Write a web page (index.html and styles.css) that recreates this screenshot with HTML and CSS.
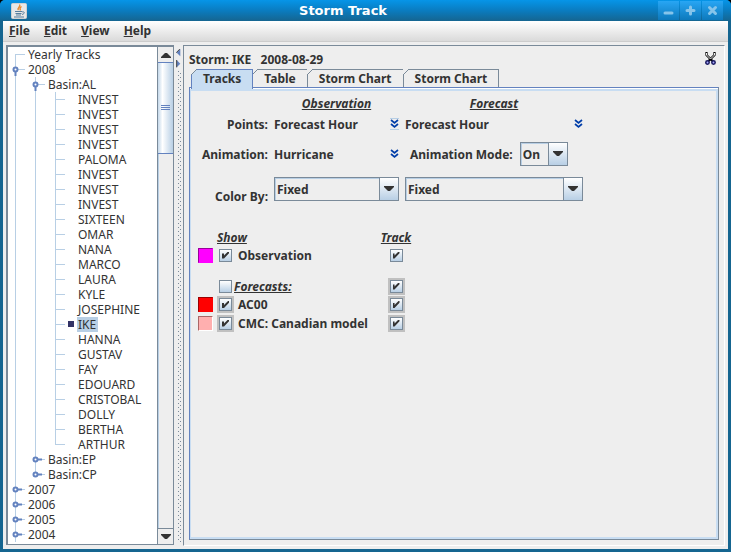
FILE: index.html
```html
<!DOCTYPE html>
<html lang="en">
<head>
<meta charset="utf-8">
<title>Storm Track</title>
<link rel="stylesheet" href="styles.css">
</head>
<body>
<svg class="defs" aria-hidden="true">
  <symbol id="closed" viewBox="0 0 11 15"><circle cx="3.5" cy="7.5" r="2" fill="#fff" stroke="#6382bf" stroke-width="2"/><path d="M6 7.5h4" stroke="#6382bf" stroke-width="2"/></symbol>
  <symbol id="opened" viewBox="0 0 11 15"><circle cx="3.5" cy="7.5" r="2" fill="#fff" stroke="#6382bf" stroke-width="2"/><path d="M3.5 10v4" stroke="#6382bf" stroke-width="2"/></symbol>
  <symbol id="down" viewBox="0 0 10 6"><path d="M0 0h10v1l-4 4h-2l-4-4z" fill="#333"/></symbol>
  <symbol id="chevrons" viewBox="0 0 9 10"><path d="M1 1l3.500 3l3.500-3M1 5l3.500 3l3.500-3" fill="none" stroke="#003da8" stroke-width="1.700"/></symbol>
</svg>
<div class="window">
  <header class="titlebar">
    <svg class="java" viewBox="0 0 16 16" aria-hidden="true"><rect x=".5" y=".5" width="15" height="15" rx="1" fill="#e8e8e8" stroke="#d0d0d0"/><path d="M8.500 1.500c2 2-3 3-1 5.500M10.500 3.500c-2 1-2 2-1 4" fill="none" stroke="#e8892c" stroke-width="1.300"/><path d="M4 8.500h7M4.500 10.500h6M5 12h5M3 14h10M11 9c3-1 3 2 0 2.500" fill="none" stroke="#587e9e"/></svg>
    <h1>Storm Track</h1>
    <div class="winbtns">
      <button aria-label="Minimize"><svg viewBox="0 0 11 11"><path d="M2 8h7" /></svg></button>
      <button aria-label="Maximize"><svg viewBox="0 0 11 11"><path d="M2 5.500h7M5.500 2v7"/></svg></button>
      <button aria-label="Close"><svg viewBox="0 0 11 11"><path d="M2.500 2.500l6 6M8.500 2.500l-6 6"/></svg></button>
    </div>
  </header>
  <nav class="menubar">
    <button><u>F</u>ile</button><button><u>E</u>dit</button><button><u>V</u>iew</button><button><u>H</u>elp</button>
  </nav>
  <main class="split">
    <section class="browser">
      <ul class="tree">
        <li>Yearly Tracks</li>
        <li><svg class="knob"><use href="#opened"/></svg>2008
          <ul>
            <li><svg class="knob"><use href="#opened"/></svg>Basin:AL
              <ul class="leaves">
                <li>INVEST</li><li>INVEST</li><li>INVEST</li><li>INVEST</li><li>PALOMA</li><li>INVEST</li><li>INVEST</li><li>INVEST</li><li>SIXTEEN</li><li>OMAR</li><li>NANA</li><li>MARCO</li><li>LAURA</li><li>KYLE</li><li>JOSEPHINE</li><li class="current"><span>IKE</span></li><li>HANNA</li><li>GUSTAV</li><li>FAY</li><li>EDOUARD</li><li>CRISTOBAL</li><li>DOLLY</li><li>BERTHA</li><li>ARTHUR</li>
              </ul>
            </li>
            <li><svg class="knob"><use href="#closed"/></svg>Basin:EP</li>
            <li><svg class="knob"><use href="#closed"/></svg>Basin:CP</li>
          </ul>
        </li>
        <li><svg class="knob"><use href="#closed"/></svg>2007</li>
        <li><svg class="knob"><use href="#closed"/></svg>2006</li>
        <li><svg class="knob"><use href="#closed"/></svg>2005</li>
        <li class="more"><svg class="knob"><use href="#closed"/></svg>2004</li>
      </ul>
      <div class="scrollbar">
        <button class="up" aria-label="Scroll up"><svg class="arrow"><use href="#down"/></svg></button>
        <div class="thumb"><i></i></div>
        <div class="track"></div>
        <button aria-label="Scroll down"><svg class="arrow"><use href="#down"/></svg></button>
      </div>
    </section>
    <div class="divider">
      <svg viewBox="0 0 5 24" aria-hidden="true"><path d="M4.500 0v8l-4-4z" fill="#6382bf"/><path d="M4 0l-4 4" stroke="#333"/><path d="M.5 12v8l4-4z" fill="#6382bf"/><path d="M.5 12v8" stroke="#333"/></svg>
      <div class="grip"></div>
    </div>
    <section class="detail">
      <div class="heading"><h2>Storm: IKE &nbsp; 2008-08-29</h2>
        <button aria-label="Remove"><svg viewBox="0 0 11 13"><path d="M1.500 0v3l6 6M9.500 0v3l-6 6" fill="none" stroke="#000" stroke-width="2.200"/><path d="M1.500 1v2l4 4M9.500 1v2l-4 4" fill="none" stroke="#eee"/><circle cx="2.500" cy="10.500" r="1.700" fill="#aaf" stroke="#1a1a60" stroke-width="1.500"/><circle cx="8.500" cy="10.500" r="1.700" fill="#aaf" stroke="#1a1a60" stroke-width="1.500"/></svg></button>
      </div>
      <div class="tabs" role="tablist">
        <button role="tab" aria-selected="true">Tracks</button><button role="tab">Table</button><button role="tab">Storm Chart</button><button role="tab">Storm Chart</button>
      </div>
      <div class="panel">
        <div class="settings">
          <span></span><h3>Observation</h3><h3>Forecast</h3>
          <span class="name">Points:</span>
          <div class="pick">Forecast Hour<button class="hover" aria-label="Observation points"><svg><use href="#chevrons"/></svg></button></div>
          <div class="pick">Forecast Hour<button aria-label="Forecast points"><svg><use href="#chevrons"/></svg></button></div>
          <span class="name">Animation:</span>
          <div class="pick">Hurricane<button aria-label="Animation"><svg><use href="#chevrons"/></svg></button></div>
          <div class="mode"><label for="mode">Animation Mode:</label><div class="combo"><select id="mode"><option>On</option><option>Off</option></select><span><svg class="arrow"><use href="#down"/></svg></span></div></div>
          <label class="name low" for="color">Color By:</label>
          <div class="combo"><select id="color"><option>Fixed</option></select><span><svg class="arrow"><use href="#down"/></svg></span></div>
          <div class="combo"><select aria-label="Forecast color by"><option>Fixed</option></select><span><svg class="arrow"><use href="#down"/></svg></span></div>
        </div>
        <div class="shows">
          <span></span><h3 class="wide">Show</h3><h3>Track</h3>
          <button class="swatch magenta" aria-label="Observation color"></button><input id="obs" type="checkbox" checked><label for="obs">Observation</label><input type="checkbox" checked aria-label="Observation track">
          <span class="gap"></span>
          <span></span><input id="fc" type="checkbox"><label class="group" for="fc">Forecasts:</label><input class="ring" type="checkbox" checked aria-label="Forecast tracks">
          <button class="swatch red" aria-label="AC00 color"></button><input class="ring" id="ac" type="checkbox" checked><label for="ac">AC00</label><input class="ring" type="checkbox" checked aria-label="AC00 track">
          <button class="swatch pink" aria-label="CMC color"></button><input class="ring" id="cmc" type="checkbox" checked><label for="cmc">CMC: Canadian model</label><input class="ring" type="checkbox" checked aria-label="CMC track">
        </div>
      </div>
    </section>
  </main>
</div>
</body>
</html>
```
FILE: styles.css
```css
* { box-sizing: border-box; }
body { margin: 0; background: #000; color: #333; font: bold 12px/15px "Noto Sans", "Open Sans", sans-serif; }
button, select, input { margin: 0; padding: 0; border: 0; background: none; color: inherit; font: inherit; }
svg { display: block; }
h1, h2, h3, ul { margin: 0; padding: 0; font-size: inherit; list-style: none; }
.defs { position: absolute; width: 0; height: 0; }
.window { display: flex; flex-direction: column; height: 100vh; padding: 0 3px 3px; border-radius: 5px 5px 0 0; background: #156590; }
.titlebar { display: flex; flex: none; align-items: center; height: 21px; margin: 0 -3px; padding: 0 8px 0 11px; border-radius: 5px 5px 0 0; background: linear-gradient(#0695e8, #0a7cc0 50%, #156590); }
.java { width: 16px; height: 16px; }
h1 { flex: 1; padding-left: 1px; color: #fff; font: bold 13px/20px "DejaVu Sans", sans-serif; text-align: center; }
.winbtns { display: flex; gap: 1px; }
.winbtns button { display: grid; place-items: center; width: 21px; height: 19px; background: linear-gradient(#28a6f4, #0d79bc); }
.winbtns svg { width: 11px; height: 11px; fill: none; stroke: #86c4ea; stroke-width: 3; stroke-linecap: round; }
.menubar { display: flex; flex: none; gap: 14px; height: 21px; padding: 0 6px 2px; border-bottom: 1px solid #ccc; background: linear-gradient(#fff, #dadada); }
.split { display: flex; flex: 1; min-height: 0; padding: 3px; background: #eee; }
.browser { display: flex; flex: 0 0 168px; margin-bottom: 1px; border: solid #7a8a99; border-width: 2px 1px 1px 2px; background: #fff; }
.tree { flex: 1; overflow: hidden; font-weight: normal; }
.tree li { position: relative; padding-left: 20px; }
.tree .leaves li { padding-left: 30px; }
.tree li::before { content: ""; position: absolute; top: 0; bottom: 0; left: 7px; width: 1px; background: #b8cfe5; }
.tree > li:first-child::before { top: 7px; }
.tree li:last-child:not(.more)::before { bottom: auto; height: 8px; }
.tree li::after { content: ""; position: absolute; top: 7px; left: 7px; width: 10px; height: 1px; background: #b8cfe5; }
.knob { position: absolute; z-index: 1; top: 0; left: 4px; width: 11px; height: 15px; }
.current span { position: relative; display: inline-block; margin-left: -1px; padding: 0 2px 0 1px; background: #b8cfe5; }
.current span::before { content: ""; position: absolute; top: 4px; left: -9px; width: 6px; height: 6px; background: #336; }
.scrollbar { display: flex; flex: none; flex-direction: column; width: 16px; border-left: 1px solid #7a8a99; background: #eee; }
.scrollbar button { display: grid; flex: none; place-items: center; height: 15px; background: #eee; }
.scrollbar button:last-child { height: 16px; border-top: 1px solid #7a8a99; }
.arrow { width: 10px; height: 6px; }
.scrollbar button .arrow { width: 10px; height: 6px; }
.up .arrow { transform: rotate(180deg); }
.thumb { display: grid; flex: 0 0 18.5%; place-items: center; border: solid #6382bf; border-width: 1px 0; background: linear-gradient(90deg, #c4d8ea, #fff 30%, #b8cfe5); }
.thumb i { width: 9px; height: 5px; border: solid #6382bf; border-width: 1px 0; background: linear-gradient(transparent 1px, #6382bf 1px 2px, transparent 2px); }
.track { flex: 1; border-left: 1px solid #b8cfe5; }
.divider { display: flex; flex: 0 0 9px; flex-direction: column; padding: 4px 0 3px 2px; }
.divider svg { flex: none; width: 5px; height: 22px; }
.grip { flex: 1; width: 4px; margin-left: 2px; background: conic-gradient(at 1px 1px, transparent 75%, #7a8a99 0) 0 0 / 4px 4px, conic-gradient(at 1px 1px, transparent 75%, #7a8a99 0) 2px 2px / 4px 4px; }
.detail { display: flex; flex: 1; flex-direction: column; min-width: 0; padding: 5px; border: 1px solid #fff; border-top-color: #7a8a99; border-left-color: #7a8a99; }
.heading { display: flex; justify-content: space-between; height: 18px; }
.heading h2 { padding-top: 1px; }
.heading button { padding-bottom: 3px; }
.heading svg { width: 11px; height: 13px; margin-right: 3px; }
.tabs { display: flex; flex: none; height: 18px; padding-left: 2px; }
.tabs button { position: relative; height: 18px; padding: 0 11px; border: solid #7a8a99; border-width: 1px 1px 0 0; background: #eee; }
.tabs button::before { content: ""; position: absolute; top: -1px; left: -1px; width: 6px; height: 6px; background: linear-gradient(135deg, #eee 45%, #7a8a99 45% 55%, transparent 55%); }
.tabs [aria-selected] { z-index: 1; height: 20px; padding-bottom: 2px; border-color: #6382bf; border-left-width: 1px; background: #c8ddf2; }
.panel { flex: 1; padding: 6px 7px; border: 1px solid #7a8a99; border-top-color: #6382bf; border-left-color: #6382bf; box-shadow: inset 0 1px #fff, inset 1px 0 #c8ddf2, inset 0 3px #c8ddf2, inset -2px -2px #c8ddf2; }
.settings { display: grid; grid-template: 18px 24px 36px 34px / 71px 125px 178px; column-gap: 6px; align-items: center; justify-content: start; }
.settings > h3 { justify-self: center; }
h3, .group { font-style: italic; text-decoration: underline; }
.name { justify-self: end; }
.low { padding-top: 15px; }
.pick { display: flex; align-items: center; justify-content: space-between; }
.pick button { display: grid; place-items: center; width: 9px; height: 12px; }
.pick svg { width: 9px; height: 10px; }
.pick .hover { border: solid #b8cfe5; border-width: 1px 0; }
.mode { display: flex; gap: 7px; align-items: center; padding-left: 5px; }
.combo { position: relative; height: 24px; border: 1px solid #7a8a99; box-shadow: inset 1px 1px #b8cfe5; }
.combo select { display: block; width: 100%; height: 100%; padding: 0 20px 0 2px; appearance: none; }
.combo span { position: absolute; top: 0; right: 0; bottom: 0; display: grid; place-items: center; width: 19px; border-left: 1px solid #7a8a99; background: linear-gradient(#fff, #b8cfe5); pointer-events: none; }
.mode .combo { width: 48px; }
.shows { display: grid; grid-template: 18px 18px 13px 18px 19px 18px / 15px 17px 137px 34px; column-gap: 4px; align-items: center; justify-content: start; margin-top: 22px; padding-left: 1px; }
.shows h3 { justify-self: center; }
.shows .wide { grid-column: span 2; justify-self: start; }
.gap { grid-column: 1 / -1; }
.group { margin-left: -4px; }
input[type="checkbox"] { justify-self: center; width: 13px; height: 13px; border: 1px solid #7a8a99; background: linear-gradient(#fff, #b8cfe5); appearance: none; }
input:checked::after { content: ""; display: block; width: 7px; height: 7px; margin: 2px; background: #333; clip-path: polygon(0 29%, 29% 29%, 29% 57%, 86% 0, 100% 0, 100% 25%, 29% 100%, 0 100%); }
.ring { outline: 2px solid #c0c0c0; }
.swatch { width: 15px; height: 15px; border: 1px solid; }
.magenta { border-color: #909 #f0f #f0f #909; background: #f0f; }
.red { border-color: #900 red red #900; background: red; }
.pink { border-color: #a66 #fff #fff #a66; background: #ffafaf; }
```
